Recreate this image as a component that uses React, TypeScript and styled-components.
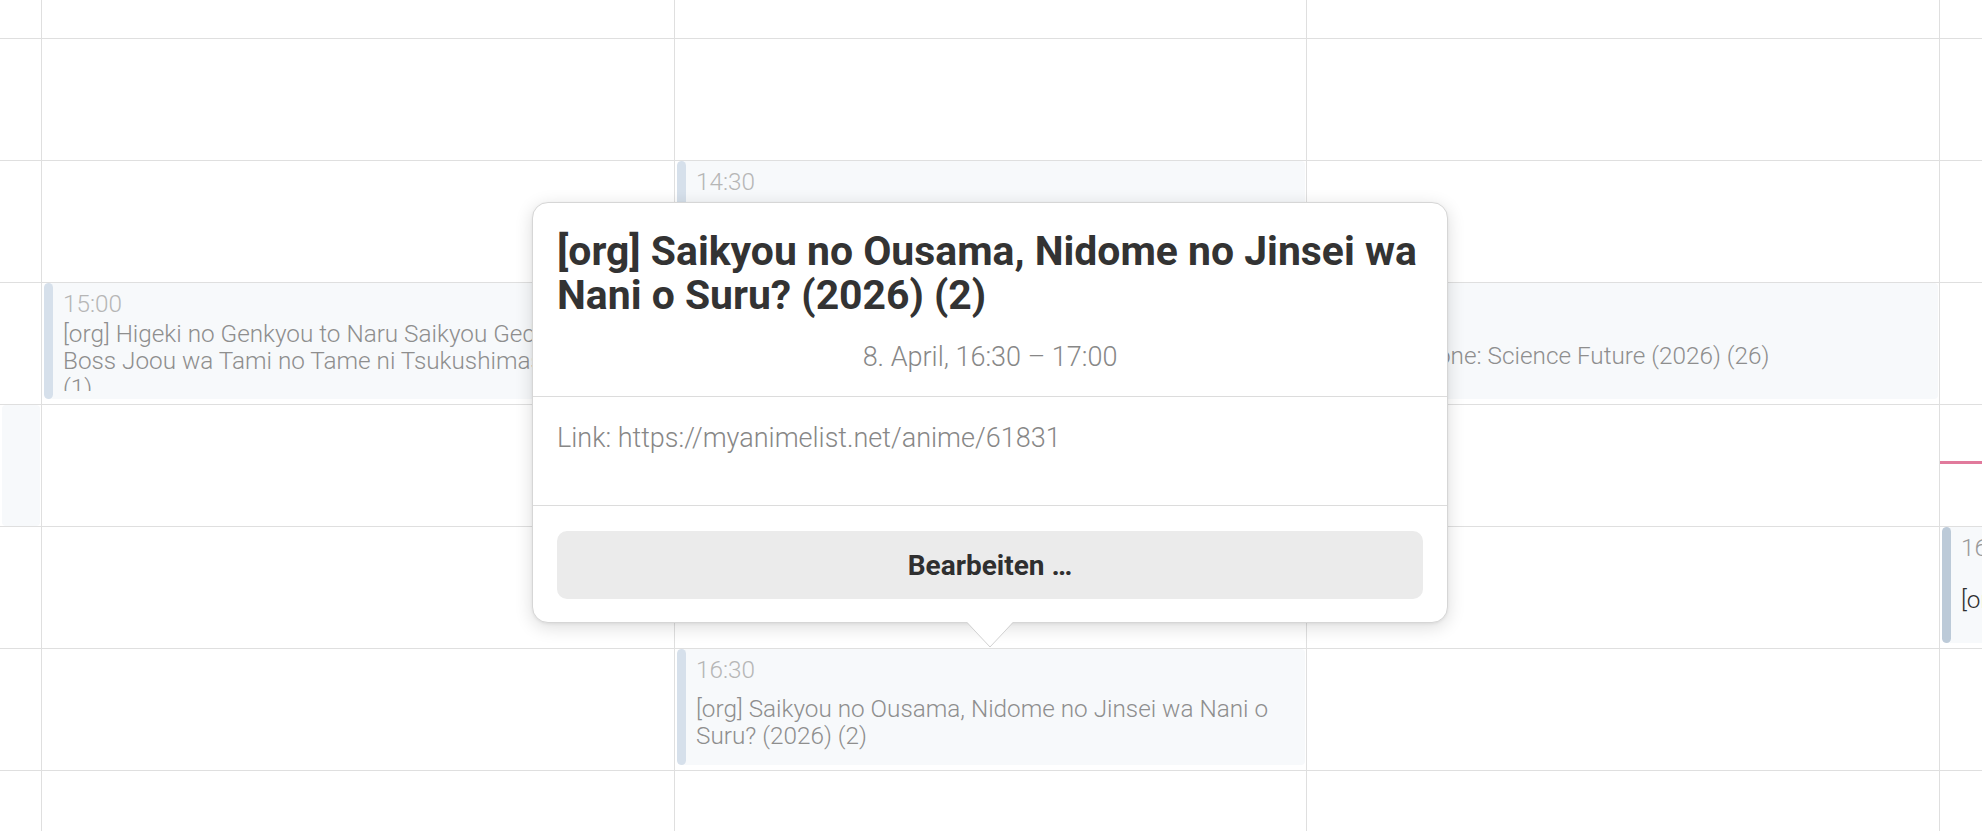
import React from "react";
import styled, { createGlobalStyle } from "styled-components";

const GlobalStyle = createGlobalStyle`
  html, body {
    margin: 0;
    padding: 0;
    background: #ffffff;
    overflow: hidden;
  }
  body {
    font-family: Roboto, "Open Sans", sans-serif;
    -webkit-font-smoothing: antialiased;
  }
  * { box-sizing: border-box; }
`;

const LINE = "#dfdfdf";
const SLOT = 122;
const FIRST_SLOT = 39;
const START_MIN = 14 * 60;

const Calendar = styled.div`
  position: relative;
  display: grid;
  grid-template-columns: 42px 633px 632px 633px 633px;
  width: 1982px;
  height: 831px;
  overflow: hidden;
  background: #fff;
`;

const DayColumn = styled.div<{ $last?: boolean }>`
  position: relative;
  display: flex;
  flex-direction: column;
  overflow: hidden;
  border-right: ${(p) => (p.$last ? "none" : `1px solid ${LINE}`)};
`;

const Slot = styled.div<{ $h: number }>`
  flex: 0 0 ${(p) => p.$h}px;
  border-bottom: 1px solid ${LINE};
`;

const EventCard = styled.div<{ $top: number; $h: number }>`
  position: absolute;
  left: 2px;
  right: 1px;
  top: ${(p) => p.$top}px;
  height: ${(p) => p.$h}px;
  display: flex;
  background: #f7f9fb;
  border-radius: 4px;
  overflow: hidden;
`;

const Bar = styled.div<{ $today?: boolean }>`
  flex: 0 0 9px;
  border-radius: 5px;
  background: ${(p) => (p.$today ? "#bccad8" : "#d6e0eb")};
`;

const EventBody = styled.div`
  flex: 1;
  min-width: 0;
  display: flex;
  flex-direction: column;
  padding: 8px 10px 8px 10px;
`;

const EventTime = styled.div<{ $today?: boolean }>`
  font-weight: 300;
  font-size: 24.3px;
  line-height: 26px;
  color: ${(p) => (p.$today ? "#9a9a9a" : "#b6b6b6")};
  white-space: nowrap;
`;

const TitleArea = styled.div`
  flex: 1;
  min-height: 0;
  margin-top: 3px;
  display: flex;
  flex-direction: column;
  overflow: hidden;
`;

const EventTitle = styled.div<{ $today?: boolean }>`
  margin: auto 0;
  font-weight: 300;
  font-size: 24.3px;
  line-height: 27px;
  color: ${(p) => (p.$today ? "#2e2e2e" : "#8e8e8e")};
`;

const NowLine = styled.div`
  position: absolute;
  left: 0;
  right: 0;
  top: 461px;
  height: 3px;
  background: #e17a9c;
`;

const Popover = styled.div`
  position: absolute;
  left: 532px;
  top: 202px;
  width: 916px;
  height: 421px;
  display: flex;
  flex-direction: column;
  background: #fff;
  border: 1px solid #d6d6d6;
  border-radius: 16px;
  box-shadow: 0 4px 18px rgba(0, 0, 0, 0.14), 0 1px 3px rgba(0, 0, 0, 0.06);
`;

const PopHeader = styled.div`
  padding: 26px 24px 23px;
  border-bottom: 1px solid #dcdcdc;
`;

const PopTitle = styled.h1`
  margin: 0;
  font-weight: 700;
  font-size: 40.9px;
  line-height: 44px;
  color: #333333;
`;

const PopDate = styled.div`
  margin-top: 24px;
  text-align: center;
  font-weight: 300;
  font-size: 27px;
  line-height: 32px;
  color: #878787;
`;

const PopBody = styled.div`
  padding: 25px 24px 51px;
  border-bottom: 1px solid #dcdcdc;
  font-weight: 300;
  font-size: 27px;
  line-height: 32px;
  color: #878787;
`;

const PopFooter = styled.div`
  flex: 1;
  padding: 25px 24px 0;
`;

const EditButton = styled.button`
  display: flex;
  align-items: center;
  justify-content: center;
  width: 100%;
  height: 68px;
  border: none;
  border-radius: 10px;
  background: #ebebeb;
  font-family: Roboto, "Open Sans", sans-serif;
  font-weight: 700;
  font-size: 28px;
  color: #2f2f2f;
  cursor: pointer;
`;

const Arrow = styled.svg`
  position: absolute;
  top: 100%;
  left: 50%;
  margin-left: -23px;
  overflow: visible;
`;

type Ev = {
  start: string;
  title?: string;
  time?: string;
  height?: number;
  today?: boolean;
  noBar?: boolean;
};

const toTop = (t: string) => {
  const [h, m] = t.split(":").map(Number);
  return FIRST_SLOT + ((h * 60 + m - START_MIN) / 30) * SLOT;
};

function CalendarEvent({ ev }: { ev: Ev }) {
  return (
    <EventCard $top={toTop(ev.start)} $h={ev.height ?? 116}>
      {!ev.noBar && <Bar $today={ev.today} />}
      {ev.time !== undefined && (
        <EventBody>
          <EventTime $today={ev.today}>{ev.time}</EventTime>
          <TitleArea>
            <EventTitle $today={ev.today}>{ev.title}</EventTitle>
          </TitleArea>
        </EventBody>
      )}
    </EventCard>
  );
}

const columns: Ev[][] = [
  [{ start: "15:30", height: 121, noBar: true }],
  [
    {
      start: "15:00",
      time: "15:00",
      title:
        "[org] Higeki no Genkyou to Naru Saikyou Gedou Last Boss Joou wa Tami no Tame ni Tsukushimasu. (2026) (1)",
    },
  ],
  [
    {
      start: "14:30",
      time: "14:30",
      title: "[org] Kamiina Botan, Yoeru Sugata wa Yuri no Hana (2026) (2)",
    },
    {
      start: "16:30",
      time: "16:30",
      title: "[org] Saikyou no Ousama, Nidome no Jinsei wa Nani o Suru? (2026) (2)",
    },
  ],
  [
    {
      start: "15:00",
      time: "15:00",
      title: "[org] Dr. Stone: Science Future (2026) (26)",
    },
  ],
  [
    {
      start: "16:00",
      time: "16:00",
      title: "[org] Yuusha Party wo Tsuihou sareta (2026) (3)",
      today: true,
    },
  ],
];

const slotHeights = [FIRST_SLOT, SLOT, SLOT, SLOT, SLOT, SLOT, SLOT, SLOT];

export default function App() {
  return (
    <>
      <GlobalStyle />
      <Calendar>
        {columns.map((evs, i) => (
          <DayColumn key={i} $last={i === columns.length - 1}>
            {slotHeights.map((h, j) => (
              <Slot key={j} $h={h} />
            ))}
            {evs.map((ev, k) => (
              <CalendarEvent key={k} ev={ev} />
            ))}
            {i === columns.length - 1 && <NowLine />}
          </DayColumn>
        ))}

        <Popover>
          <PopHeader>
            <PopTitle>
              [org] Saikyou no Ousama, Nidome no Jinsei wa Nani o Suru? (2026) (2)
            </PopTitle>
            <PopDate>8. April, 16:30 – 17:00</PopDate>
          </PopHeader>
          <PopBody>Link: https://myanimelist.net/anime/61831</PopBody>
          <PopFooter>
            <EditButton>Bearbeiten …</EditButton>
          </PopFooter>
          <Arrow width="46" height="26" viewBox="0 0 46 26">
            <polygon points="0,0 23,25 46,0" fill="#ffffff" />
            <polyline
              points="0,0.5 23,25 46,0.5"
              fill="none"
              stroke="#d2d2d2"
              strokeWidth="1"
            />
          </Arrow>
        </Popover>
      </Calendar>
    </>
  );
}
